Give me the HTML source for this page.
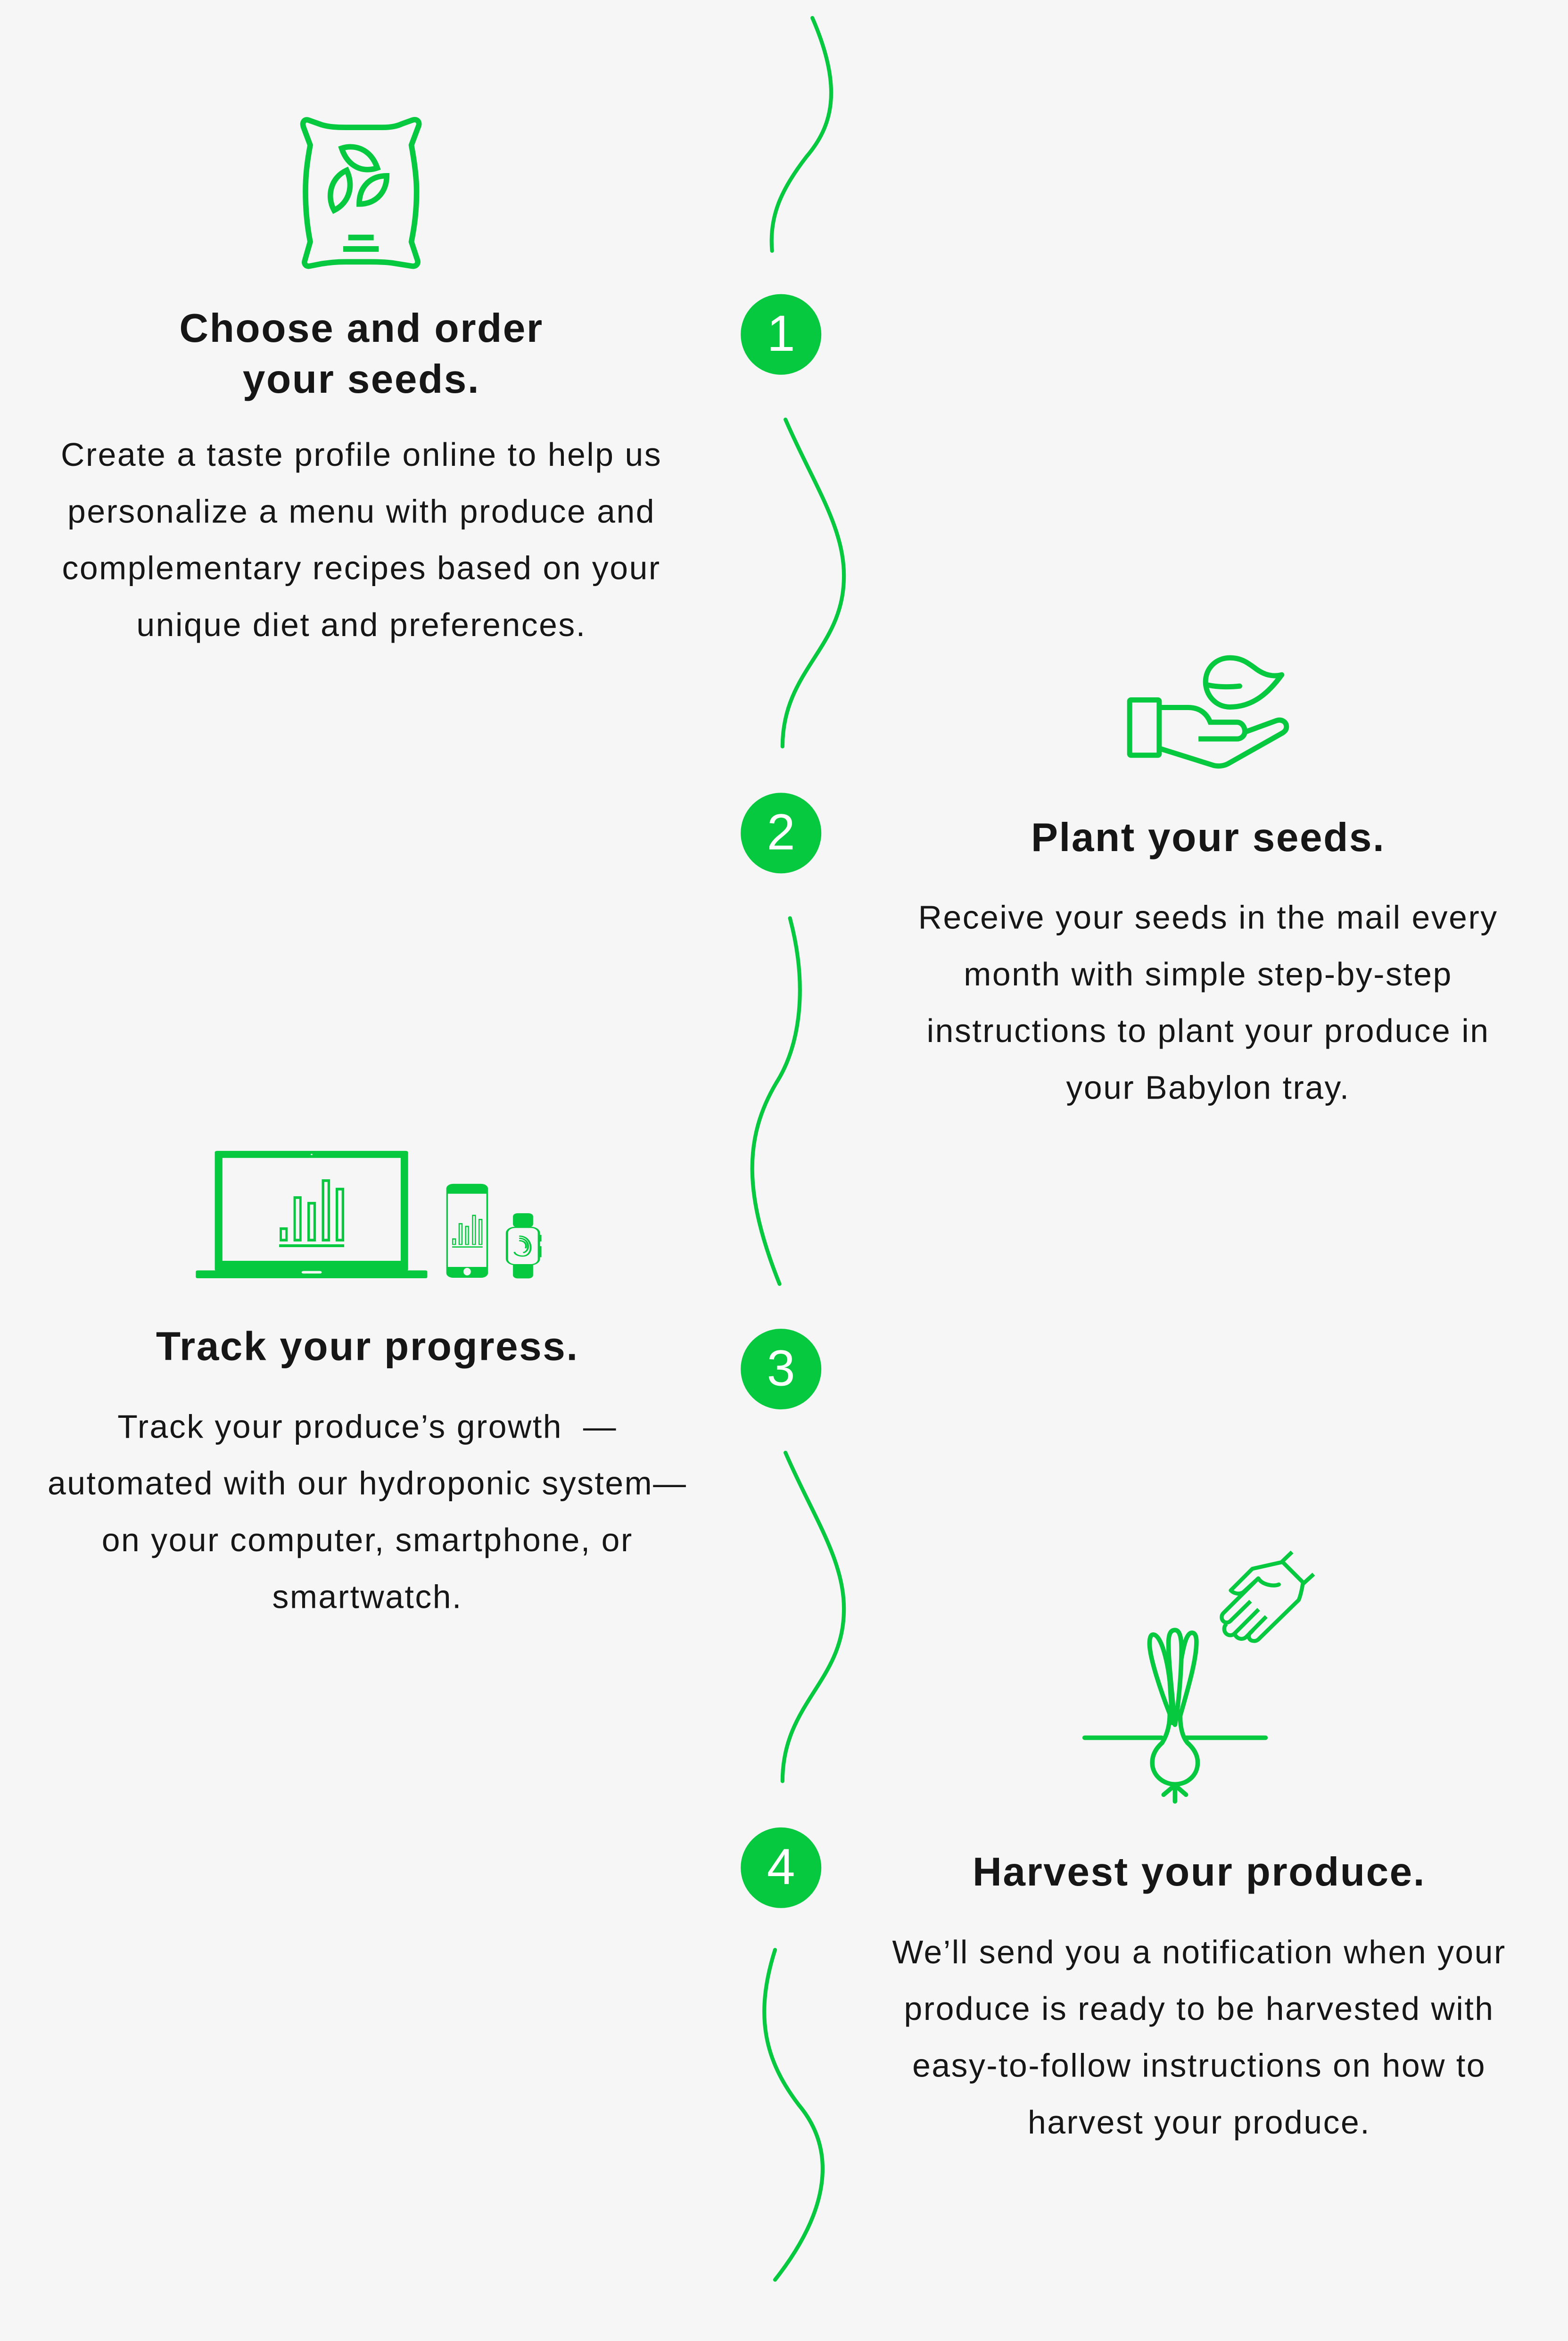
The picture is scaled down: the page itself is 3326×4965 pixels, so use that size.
<!DOCTYPE html>
<html><head><meta charset="utf-8"><style>
html,body{margin:0;padding:0;background:#f6f6f6;overflow:hidden}
#w{position:absolute;left:0;top:0;width:1050px;height:1568px;transform:scale(3.16762,3.16645);transform-origin:0 0;background:#f6f6f6;font-family:"Liberation Sans",sans-serif;color:#161616}
.h{position:absolute;font-weight:bold;font-size:27px;text-align:center;line-height:34px;letter-spacing:0.8px}
.p{position:absolute;font-size:22px;text-align:center;line-height:38px;letter-spacing:0.8px;white-space:nowrap}
.c{position:absolute;width:54px;height:54px;border-radius:50%;background:#07c940;color:#fff;font-size:34px;line-height:54px;text-align:center}
svg{position:absolute;overflow:visible}
</style></head><body><div id="w">
<svg style="left:0;top:0" width="1050" height="1568" viewBox="0 0 1050 1568" fill="none" stroke="#07c940" stroke-width="2.6" stroke-linecap="round">
<path d="M544,12 C565,60 557,85 540,105 C523,127 515,145 517,168"/>
<path d="M526,281 C545,325 567,355 565,390 C563,435 524,450 524,500"/>
<path d="M529,615 C541,660 536,700 520,725 C498,762 498,800 522,860"/>
<path d="M526,973 C545,1017 567,1047 565,1082 C563,1127 524,1142 524,1193"/>
<path d="M519,1306 C505,1350 512,1380 535,1410 C560,1440 556,1480 519,1527"/>
</svg>
<div class="c" style="left:496px;top:197px">1</div>
<div class="c" style="left:496px;top:531px">2</div>
<div class="c" style="left:496px;top:890px">3</div>
<div class="c" style="left:496px;top:1224px">4</div>

<svg style="left:189.4px;top:63.1px" width="94.7" height="126.3" viewBox="0 0 900 1200" fill="none" stroke="#07c940" stroke-width="35">
<path d="M165,165 L250,195 C300,210 350,212 400,212 L640,212 C700,212 740,200 760,190 L830,165 C860,155 880,180 865,210 L822,325 C845,450 855,550 855,620 C855,750 840,850 822,940 L860,1055 C870,1080 850,1100 825,1095 L700,1075 C660,1070 620,1068 560,1068 L400,1068 C330,1068 290,1075 250,1080 L175,1095 C150,1100 135,1080 145,1055 L178,940 C160,850 148,750 148,620 C148,530 155,450 178,325 L135,210 C125,180 140,158 165,165 Z"/>
<path d="M378,345 C450,320 560,340 605,470 C520,500 420,470 378,345 Z"/>
<path d="M410,485 C310,530 280,650 330,740 C430,690 455,580 410,485 Z"/>
<path d="M665,520 C560,520 490,590 490,700 C600,700 665,620 665,520 Z"/>
<rect x="420" y="895" width="162" height="36" fill="#07c940" stroke="none"/>
<rect x="388" y="968" width="226" height="36" fill="#07c940" stroke="none"/>
</svg>
<div class="h" style="left:42px;width:400px;top:203px">Choose and order<br>your seeds.</div>
<div class="p" style="left:0;width:484px;top:286px">Create a taste profile online to help us<br>personalize a menu with produce and<br>complementary recipes based on your<br>unique diet and preferences.</div>

<svg style="left:751.4px;top:432.7px" width="123.1" height="85.3" viewBox="0 0 1170 810" fill="none" stroke="#07c940" stroke-width="33" stroke-linejoin="round">
<rect x="52" y="340" width="188" height="352" rx="8"/>
<path d="M240,388 H425 C490,388 540,420 565,482 H735 C765,482 785,510 785,540 C785,570 760,588 735,588 H490" stroke-linejoin="miter"/>
<path d="M785,545 L985,472 C1020,460 1050,480 1050,510 C1050,530 1040,540 1025,550 L680,745 C650,762 610,765 580,755 L240,648"/>
<path d="M1020,180 C960,195 910,180 860,145 C800,100 760,72 690,72 C600,72 535,140 535,225 C535,310 600,385 690,385 C840,385 940,290 1020,180 Z"/>
<path d="M550,245 C620,260 700,258 752,252" stroke-linecap="round"/>
</svg>
<div class="h" style="left:609px;width:400px;top:544px">Plant your seeds.</div>
<div class="p" style="left:567px;width:484px;top:596px">Receive your seeds in the mail every<br>month with simple step-by-step<br>instructions to plant your produce in<br>your Babylon tray.</div>

<svg style="left:126.3px;top:764.2px" width="243.1" height="94.7" viewBox="0 0 1568 900" preserveAspectRatio="none">
<g fill="#07c940">
<rect x="115" y="65" width="835" height="765" rx="10"/>
<rect x="33" y="826" width="1000" height="50" rx="8"/>
<rect x="1115" y="275" width="180" height="598" rx="30"/>
<rect x="1403" y="462" width="87" height="90" rx="20"/>
<rect x="1403" y="770" width="87" height="107" rx="20"/>
<rect x="1372" y="548" width="148" height="245" rx="40"/>
<rect x="1517" y="600" width="9" height="42"/><rect x="1517" y="672" width="9" height="70"/>
</g>
<g fill="#f6f6f6">
<rect x="148" y="110" width="770" height="655"/>
<rect x="490" y="830" width="87" height="16" rx="8"/>
<circle cx="533" cy="88" r="4"/>
<rect x="1122" y="338" width="166" height="466"/>
<ellipse cx="1205" cy="834" rx="16" ry="24"/>
<rect x="1382" y="556" width="128" height="230" rx="30"/>
</g>
<g fill="#07c940">
<rect x="395" y="552" width="35" height="90"/><rect x="455" y="354" width="35" height="288"/><rect x="515" y="390" width="37" height="252"/><rect x="577" y="246" width="36" height="396"/><rect x="637" y="300" width="37" height="342"/>
<rect x="393" y="660" width="281" height="18"/>
<rect x="1140" y="622" width="17" height="42"/><rect x="1168" y="525" width="17" height="139"/><rect x="1196" y="542" width="17" height="122"/><rect x="1226" y="472" width="17" height="192"/><rect x="1254" y="498" width="17" height="166"/>
<rect x="1140" y="673" width="132" height="8"/>
</g>
<g fill="#f6f6f6">
<rect x="405" y="569" width="15" height="56"/><rect x="465" y="371" width="15" height="254"/><rect x="526" y="407" width="15" height="218"/><rect x="588" y="263" width="14" height="362"/><rect x="648" y="317" width="15" height="308"/>
<rect x="1145" y="630" width="7" height="28"/><rect x="1173" y="533" width="7" height="125"/><rect x="1201" y="550" width="7" height="108"/><rect x="1231" y="480" width="7" height="178"/><rect x="1259" y="506" width="7" height="152"/>
</g>
<g fill="none" stroke="#07c940" stroke-width="8" stroke-linecap="round">
<path d="M1433,608 C1490,612 1495,735 1445,735 C1425,735 1412,722 1410,712"/>
<path d="M1433,622 C1475,625 1478,700 1450,712"/>
<path d="M1433,637 C1460,640 1462,670 1458,682"/>
</g>
</svg>
<div class="h" style="left:46px;width:400px;top:885px">Track your progress.</div>
<div class="p" style="left:4px;width:484px;top:937px">Track your produce’s growth &nbsp;—<br>automated with our hydroponic system—<br>on your computer, smartphone, or<br>smartwatch.</div>

<svg style="left:710.3px;top:1026.4px" width="189.4" height="189.4" viewBox="0 0 1568 1568" fill="none" stroke="#07c940" stroke-width="25" stroke-linecap="round" stroke-linejoin="round">
<path d="M135,1142 H562 M700,1142 H1138"/>
<path d="M565,1170 C520,1210 510,1250 510,1280 C510,1350 570,1400 636,1400 C705,1400 762,1350 762,1280 C762,1250 750,1210 705,1170 C680,1140 665,1090 665,1020"/>
<path d="M565,1170 C590,1130 607,1080 607,1010"/>
<path d="M607,1010 C560,890 495,700 495,620 C495,580 505,570 515,570 C560,570 595,720 607,830 L622,1060"/>
<path d="M636,1070 C610,800 600,700 600,620 C600,570 610,545 636,545 C660,545 672,580 672,650 C672,800 650,1000 636,1070"/>
<path d="M665,1020 C720,830 755,700 755,610 C755,575 745,560 730,560 C700,560 685,630 672,700"/>
<path d="M636,1400 V1495 M636,1405 L573,1458 M636,1405 L697,1458"/>
<g stroke-width="22" stroke-linecap="butt">
<path d="M1285,112 L1230,165 L1350,285 L1405,235"/>
<path d="M1230,168 L1065,205 L945,325 C965,345 1000,350 1020,330 L1098,258"/>
<path d="M1098,258 C1120,295 1185,305 1212,292" stroke-linecap="round"/>
<path d="M1345,285 C1340,320 1330,360 1322,378 L1100,595 C1085,610 1060,608 1050,595 C1040,580 1045,565 1060,553 L1142,470"/>
<path d="M1098,258 L905,450 C890,465 892,490 910,500 C925,508 940,500 948,490 L1055,385"/>
<path d="M922,510 C905,525 905,550 920,565 C935,578 955,575 965,565 L1100,430"/>
<path d="M968,568 C978,595 1012,602 1032,582 L1068,546"/>
</g>
</svg>
<div class="h" style="left:603px;width:400px;top:1237px">Harvest your produce.</div>
<div class="p" style="left:561px;width:484px;top:1289px">We’ll send you a notification when your<br>produce is ready to be harvested with<br>easy-to-follow instructions on how to<br>harvest your produce.</div>
</div></body></html>
